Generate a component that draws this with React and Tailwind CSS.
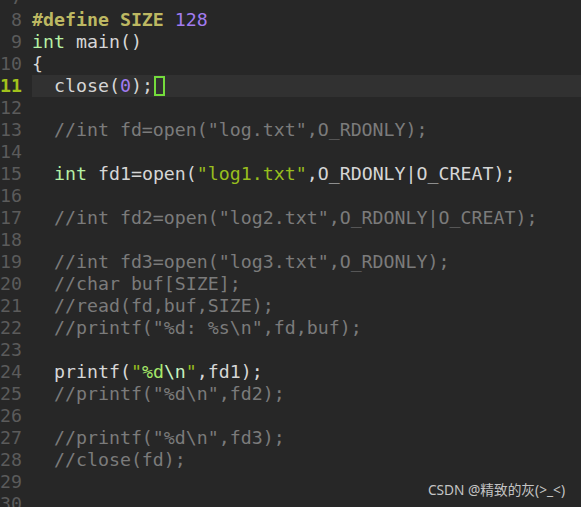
import React from "react";

const C = {
  txt: "text-[#d6d6d6]",
  cm: "text-[#7b7b7b]",
  kw: "text-[#b6f0a4]",
  pp: "text-[#bdb862] font-bold",
  num: "text-[#a27cf0]",
  str: "text-[#98be1e]",
  fmt: "text-[#a6e86a]",
  esc: "text-[#c6f2c0]",
};

const lines = [
  { n: 7, parts: [] },
  { n: 8, parts: [["#define SIZE ", C.pp], ["128", C.num]] },
  { n: 9, parts: [["int", C.kw], [" main()", C.txt]] },
  { n: 10, parts: [["{", C.txt]] },
  { n: 11, cur: true, parts: [["  close(", C.txt], ["0", C.num], [");", C.txt]] },
  { n: 12, parts: [] },
  { n: 13, parts: [["  //int fd=open(\"log.txt\",O_RDONLY);", C.cm]] },
  { n: 14, parts: [] },
  {
    n: 15,
    parts: [
      ["  ", C.txt],
      ["int", C.kw],
      [" fd1=open(", C.txt],
      ["\"log1.txt\"", C.str],
      [",O_RDONLY|O_CREAT);", C.txt],
    ],
  },
  { n: 16, parts: [] },
  { n: 17, parts: [["  //int fd2=open(\"log2.txt\",O_RDONLY|O_CREAT);", C.cm]] },
  { n: 18, parts: [] },
  { n: 19, parts: [["  //int fd3=open(\"log3.txt\",O_RDONLY);", C.cm]] },
  { n: 20, parts: [["  //char buf[SIZE];", C.cm]] },
  { n: 21, parts: [["  //read(fd,buf,SIZE);", C.cm]] },
  { n: 22, parts: [["  //printf(\"%d: %s\\n\",fd,buf);", C.cm]] },
  { n: 23, parts: [] },
  {
    n: 24,
    parts: [
      ["  printf(", C.txt],
      ["\"", C.str],
      ["%d", C.fmt],
      ["\\n", C.esc],
      ["\"", C.str],
      [",fd1);", C.txt],
    ],
  },
  { n: 25, parts: [["  //printf(\"%d\\n\",fd2);", C.cm]] },
  { n: 26, parts: [] },
  { n: 27, parts: [["  //printf(\"%d\\n\",fd3);", C.cm]] },
  { n: 28, parts: [["  //close(fd);", C.cm]] },
  { n: 29, parts: [] },
  { n: 30, parts: [] },
];

export default function App() {
  return (
    <div className="relative w-[581px] h-[507px] overflow-hidden bg-[#272727]">
      <div
        className="-mt-[13px] flex flex-col text-[18.25px] leading-[22px] whitespace-pre"
        style={{ fontFamily: '"DejaVu Sans Mono", monospace' }}
      >
        {lines.map((l) => (
          <div key={l.n} className="flex h-[22px]">
            <div
              className={`w-[22px] shrink-0 text-right ${
                l.cur ? "text-[#a2c21c] font-bold" : "text-[#5b5b5b]"
              }`}
            >
              {l.n}
            </div>
            <div className="w-[10px] shrink-0" />
            <div className={`flex flex-1 items-center ${l.cur ? "bg-[#313131]" : ""}`}>
              {l.parts.map(([t, c], i) => (
                <span key={i} className={c}>
                  {t}
                </span>
              ))}
              {l.cur && (
                <span className="ml-[1px] inline-block w-[11px] h-[20px] border-2 border-[#74dc3c]" />
              )}
            </div>
          </div>
        ))}
      </div>
      <div
        className="absolute right-[16px] bottom-[8px] text-[13.7px] leading-[18px] text-[#c4c4c4]"
        style={{ fontFamily: '"Noto Sans", "Noto Sans CJK SC", sans-serif' }}
      >
        CSDN @精致的灰(&gt;_&lt;)
      </div>
    </div>
  );
}
